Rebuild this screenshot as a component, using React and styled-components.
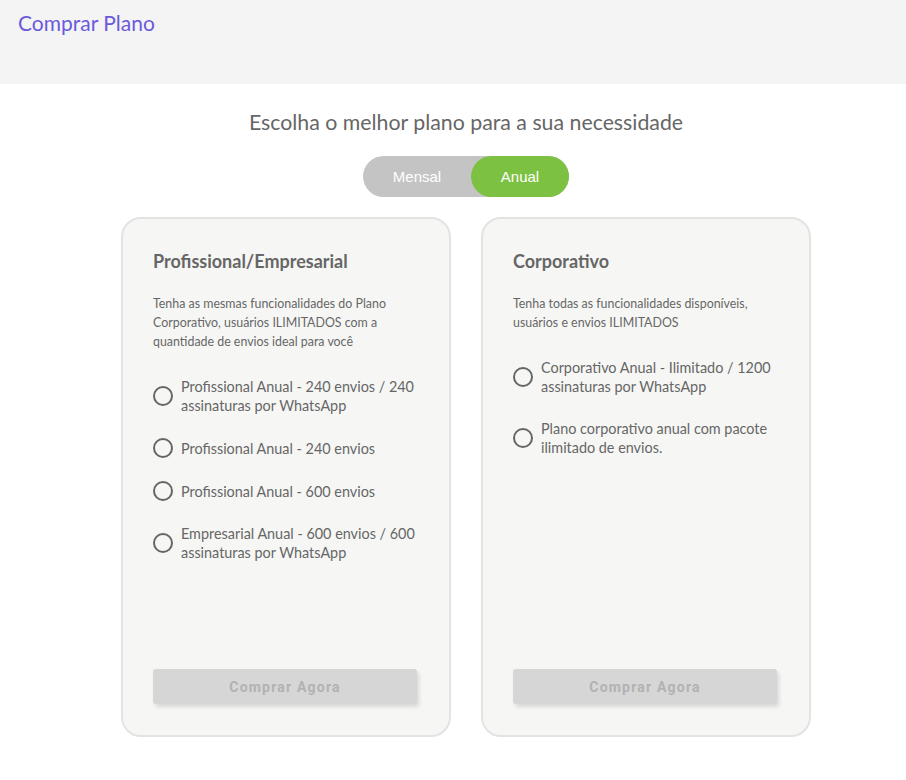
import React, { useState } from "react";
import styled, { createGlobalStyle } from "styled-components";

const GlobalStyle = createGlobalStyle`
  body {
    margin: 0;
    background: #fff;
    font-family: "Lato", "Noto Sans", sans-serif;
  }
`;

const Header = styled.header`
  height: 84px;
  background: #f4f4f4;
  padding: 10px 18px 0;
  box-sizing: border-box;
`;

const PageTitle = styled.h1`
  margin: 0;
  font-size: 21px;
  font-weight: 400;
  color: #6b5adb;
`;

const Main = styled.main`
  display: flex;
  flex-direction: column;
  align-items: center;
  padding-top: 25px;
  padding-left: 26px;
`;

const Heading = styled.h2`
  margin: 0;
  font-size: 21.3px;
  font-weight: 400;
  color: #666;
`;

const Toggle = styled.div`
  display: flex;
  width: 206px;
  height: 41px;
  margin-top: 21px;
  border-radius: 21px;
  background: #c4c4c4;
`;

const ToggleOption = styled.button`
  flex: ${p => (p.$active ? "0 0 98px" : "1")};
  border: none;
  border-radius: 21px;
  background: ${p => (p.$active ? "#7dc142" : "transparent")};
  color: #fff;
  font-family: "Liberation Sans", Arial, sans-serif;
  font-size: 15px;
  cursor: pointer;
`;

const Cards = styled.div`
  display: flex;
  gap: 30px;
  margin-top: 20px;
  margin-bottom: 40px;
`;

const Card = styled.section`
  width: 330px;
  height: 520px;
  box-sizing: border-box;
  border: 2px solid #e3e3e3;
  border-radius: 20px;
  background: #f6f7f5;
  padding: 31px 30px 31px 30px;
  display: flex;
  flex-direction: column;
`;

const CardTitle = styled.h3`
  margin: 0;
  font-size: 18px;
  font-weight: 700;
  color: #666;
`;

const Description = styled.p`
  margin: 22px 0 0;
  font-size: 12.4px;
  line-height: 19px;
  color: #666;
`;

const Options = styled.div`
  display: flex;
  flex-direction: column;
  gap: 23px;
  margin-top: 26px;
`;

const Option = styled.label`
  display: flex;
  align-items: center;
  gap: 8px;
  font-size: 14.4px;
  line-height: 19px;
  color: #666;
  cursor: pointer;
`;

const Radio = styled.span`
  flex: 0 0 auto;
  width: 16px;
  height: 16px;
  border: 2px solid #666;
  border-radius: 50%;
  box-sizing: content-box;
  background: ${p => (p.$checked ? "radial-gradient(#666 40%, transparent 45%)" : "transparent")};
`;

const BuyButton = styled.button`
  margin-top: auto;
  width: 264px;
  height: 35px;
  border: none;
  border-radius: 3px;
  background: #d6d6d6;
  color: #b2b2b2;
  font-family: Roboto, "Liberation Sans", sans-serif;
  font-weight: 700;
  font-size: 14px;
  letter-spacing: 1.2px;
  box-shadow: 2px 3px 4px rgba(0, 0, 0, 0.12);
`;

const plans = [
  {
    title: "Profissional/Empresarial",
    description:
      "Tenha as mesmas funcionalidades do Plano Corporativo, usuários ILIMITADOS com a quantidade de envios ideal para você",
    options: [
      "Profissional Anual - 240 envios / 240 assinaturas por WhatsApp",
      "Profissional Anual - 240 envios",
      "Profissional Anual - 600 envios",
      "Empresarial Anual - 600 envios / 600 assinaturas por WhatsApp"
    ]
  },
  {
    title: "Corporativo",
    description: "Tenha todas as funcionalidades disponíveis, usuários e envios ILIMITADOS",
    options: [
      "Corporativo Anual - Ilimitado / 1200 assinaturas por WhatsApp",
      "Plano corporativo anual com pacote ilimitado de envios."
    ]
  }
];

export default function App() {
  const [period, setPeriod] = useState("anual");
  const [selected, setSelected] = useState(null);

  return (
    <>
      <GlobalStyle />
      <Header>
        <PageTitle>Comprar Plano</PageTitle>
      </Header>
      <Main>
        <Heading>Escolha o melhor plano para a sua necessidade</Heading>
        <Toggle>
          <ToggleOption $active={period === "mensal"} onClick={() => setPeriod("mensal")}>
            Mensal
          </ToggleOption>
          <ToggleOption $active={period === "anual"} onClick={() => setPeriod("anual")}>
            Anual
          </ToggleOption>
        </Toggle>
        <Cards>
          {plans.map(plan => (
            <Card key={plan.title}>
              <CardTitle>{plan.title}</CardTitle>
              <Description>{plan.description}</Description>
              <Options>
                {plan.options.map(opt => (
                  <Option key={opt} onClick={() => setSelected(opt)}>
                    <Radio $checked={selected === opt} />
                    <span>{opt}</span>
                  </Option>
                ))}
              </Options>
              <BuyButton disabled={!plan.options.includes(selected)}>Comprar Agora</BuyButton>
            </Card>
          ))}
        </Cards>
      </Main>
    </>
  );
}
